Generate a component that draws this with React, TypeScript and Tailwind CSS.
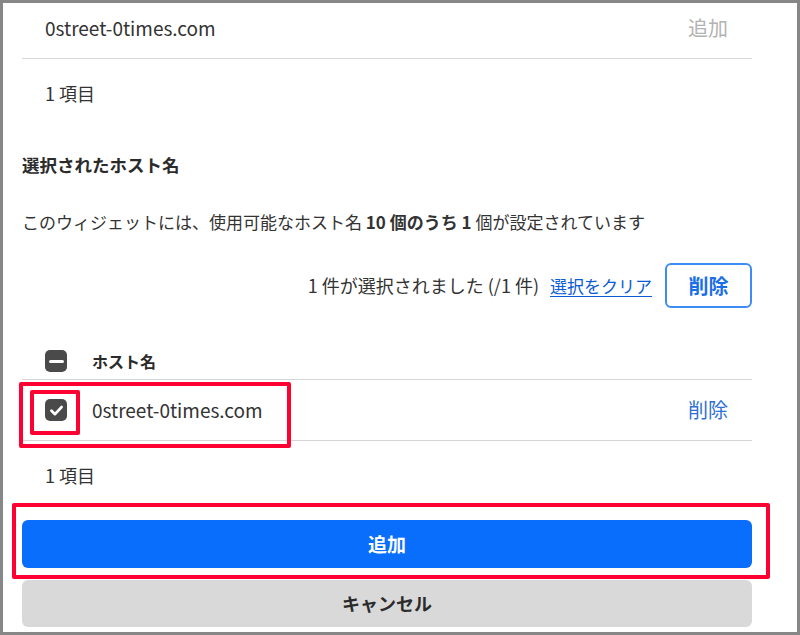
import React from "react";

const font = { fontFamily: '"Noto Sans CJK JP", "Noto Sans", sans-serif' };

function CheckBox({ mode }: { mode: "check" | "minus" }) {
  return (
    <div className="w-[22px] h-[22px] rounded-[5px] bg-[#4a4a4a] flex items-center justify-center shrink-0">
      {mode === "check" ? (
        <svg width="15" height="15" viewBox="0 0 14 14">
          <path d="M2.3 7.3 L5.6 10.4 L11.7 3.8" fill="none" stroke="white" strokeWidth="2.6" strokeLinecap="round" strokeLinejoin="round" />
        </svg>
      ) : (
        <div className="w-[15px] h-[3px] bg-white rounded-sm" />
      )}
    </div>
  );
}

export default function App() {
  return (
    <div style={font} className="w-[800px] h-[635px] border-[3px] border-[#878787] bg-white overflow-hidden text-[#333]">
      <div className="pl-[19px] pr-[45px]">
        <div className="h-[56px] pb-[5px] flex items-center justify-between pl-[23px] pr-[24px] border-b border-[#d9d9d9]">
          <span className="text-[19px] text-[#333]">0street-0times.com</span>
          <span className="text-[20px] text-[#b3b3b3]">追加</span>
        </div>
        <div className="h-[68px] flex items-center pl-[23px] text-[18px]">1 項目</div>
        <div className="mt-[26px] h-[24px] flex items-center text-[17.5px] font-bold text-[#2b2b2b]">選択されたホスト名</div>
        <div className="mt-[33px] h-[24px] flex items-center text-[17px]">
          このウィジェットには、使用可能なホスト名&nbsp;<b className="font-bold">10 個のうち 1</b>&nbsp;個が設定されています
        </div>
        <div className="mt-[29px] flex items-center justify-end">
          <span className="text-[18px]">1 件が選択されました (/1 件)</span>
          <span className="ml-[11px] text-[17px] text-[#0b5cd5] underline underline-offset-[3px]">選択をクリア</span>
          <button className="ml-[13px] w-[87px] h-[45px] rounded-[6px] border-2 border-[#3d8cf5] text-[#1a6fe6] text-[20px] font-bold flex items-center justify-center">削除</button>
        </div>
        <div className="mt-[35px] h-[37px] flex items-center pl-[23px] border-b border-[#d6d6d6]">
          <CheckBox mode="minus" />
          <span className="ml-[3px] pl-[22px] text-[16px] font-bold text-[#2b2b2b]">ホスト名</span>
        </div>
        <div className="relative h-[61px] flex items-center justify-between pl-[23px] pr-[24px] border-b border-[#d6d6d6]">
          <div className="flex items-center">
            <CheckBox mode="check" />
            <span className="ml-[25px] text-[19px]">0street-0times.com</span>
          </div>
          <span className="text-[20px] text-[#2f6fd3]">削除</span>
          <div className="absolute left-[-3px] top-[2px] w-[272px] h-[66px] border-4 border-[#ff0033] rounded-[2px] pointer-events-none" />
          <div className="absolute left-[8px] top-[10px] w-[50px] h-[45px] border-4 border-[#ff0033] rounded-[2px] pointer-events-none" />
        </div>
        <div className="h-[68px] flex items-center pl-[23px] text-[18px]">1 項目</div>
        <div className="relative mt-[11px]">
          <button className="w-full h-[48px] rounded-[6px] bg-[#0a6efd] text-white text-[19px] font-bold flex items-center justify-center">追加</button>
          <div className="absolute left-[-10px] top-[-17px] right-[-18px] bottom-[-11px] border-4 border-[#ff0033] rounded-[2px] pointer-events-none" />
        </div>
        <button className="mt-[12px] w-full h-[47px] rounded-[6px] bg-[#d9d9d9] text-[#2b2b2b] text-[18px] font-bold flex items-center justify-center">キャンセル</button>
      </div>
    </div>
  );
}
